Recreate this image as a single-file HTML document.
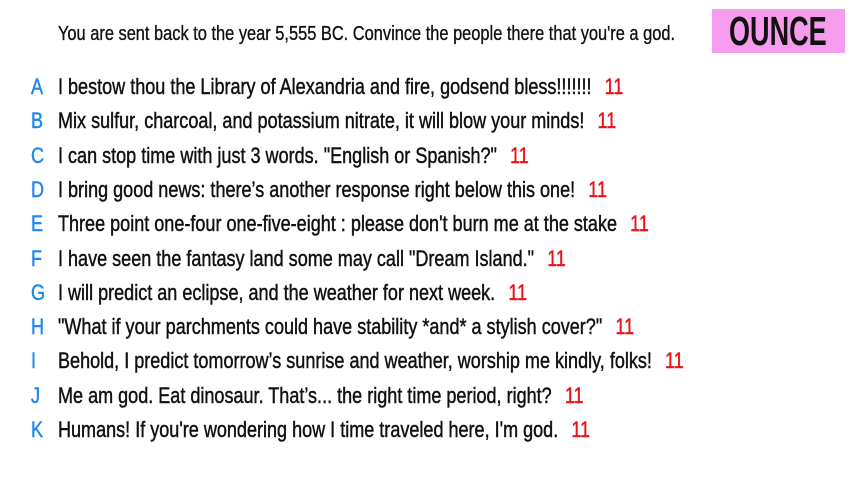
<!DOCTYPE html>
<html><head><meta charset="utf-8"><style>
body{margin:0;width:853px;height:480px;background:#fff;position:relative;overflow:hidden;font-family:"Liberation Sans",sans-serif;color:#111}
.s{position:absolute;white-space:nowrap;transform:scaleX(0.82);transform-origin:0 50%;-webkit-text-stroke:0.35px #111}
.h{left:58px;top:21px;font-size:20px;line-height:26px}
.box{position:absolute;left:712px;top:9px;width:133px;height:44px;background:#f79bec}
.o{position:absolute;left:729px;top:9px;height:44px;line-height:44px;font-size:41px;font-weight:bold;color:#111;white-space:nowrap;transform:scaleX(0.66);transform-origin:0 50%}
.r{position:absolute;left:0;height:26px;line-height:26px;font-size:22px;width:853px;-webkit-text-stroke:0.45px currentColor}
.l{position:absolute;left:31px;color:#1e88f0;transform:scaleX(0.82);transform-origin:0 50%}
.t{position:absolute;left:58px;white-space:nowrap;transform:scaleX(0.82);transform-origin:0 50%}
.n{color:#e8151b;margin-left:16px}
</style></head><body>
<div class="s h">You are sent back to the year 5,555 BC. Convince the people there that you're a god.</div>
<div class="box"></div><div class="o">OUNCE</div>
<div class="r" style="top:74px"><span class="l">A</span><span class="t">I bestow thou the Library of Alexandria and fire, godsend bless!!!!!!!<span class="n">11</span></span></div>
<div class="r" style="top:108px"><span class="l">B</span><span class="t">Mix sulfur, charcoal, and potassium nitrate, it will blow your minds!<span class="n">11</span></span></div>
<div class="r" style="top:143px"><span class="l">C</span><span class="t">I can stop time with just 3 words. "English or Spanish?"<span class="n">11</span></span></div>
<div class="r" style="top:177px"><span class="l">D</span><span class="t">I bring good news: there’s another response right below this one!<span class="n">11</span></span></div>
<div class="r" style="top:211px"><span class="l">E</span><span class="t">Three point one-four one-five-eight : please don't burn me at the stake<span class="n">11</span></span></div>
<div class="r" style="top:246px"><span class="l">F</span><span class="t">I have seen the fantasy land some may call "Dream Island."<span class="n">11</span></span></div>
<div class="r" style="top:280px"><span class="l">G</span><span class="t">I will predict an eclipse, and the weather for next week.<span class="n">11</span></span></div>
<div class="r" style="top:314px"><span class="l">H</span><span class="t">"What if your parchments could have stability *and* a stylish cover?"<span class="n">11</span></span></div>
<div class="r" style="top:348px"><span class="l">I</span><span class="t">Behold, I predict tomorrow’s sunrise and weather, worship me kindly, folks!<span class="n">11</span></span></div>
<div class="r" style="top:383px"><span class="l">J</span><span class="t">Me am god. Eat dinosaur. That’s... the right time period, right?<span class="n">11</span></span></div>
<div class="r" style="top:417px"><span class="l">K</span><span class="t">Humans! If you're wondering how I time traveled here, I'm god.<span class="n">11</span></span></div>
</body></html>
